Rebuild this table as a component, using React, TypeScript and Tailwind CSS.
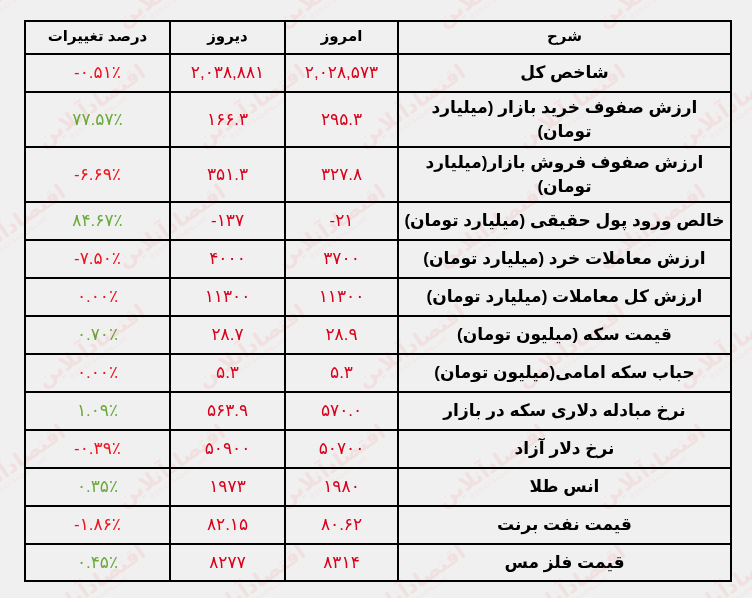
import React from "react";

type Row = { d: React.ReactNode; t: string; y: string; p: string; up: boolean; h: string };

const rows: Row[] = [
  { d: "شاخص کل", t: "۲,۰۲۸,۵۷۳", y: "۲,۰۳۸,۸۸۱", p: "-۰.۵۱٪", up: false, h: "h-[38px]" },
  { d: (<>ارزش صفوف خرید بازار (میلیارد<br />تومان)</>), t: "۲۹۵.۳", y: "۱۶۶.۳", p: "۷۷.۵۷٪", up: true, h: "h-[55px]" },
  { d: (<>ارزش صفوف فروش بازار(میلیارد<br />تومان)</>), t: "۳۲۷.۸", y: "۳۵۱.۳", p: "-۶.۶۹٪", up: false, h: "h-[55px]" },
  { d: "خالص ورود پول حقیقی (میلیارد تومان)", t: "-۲۱", y: "-۱۳۷", p: "۸۴.۶۷٪", up: true, h: "h-[38px]" },
  { d: "ارزش معاملات خرد (میلیارد تومان)", t: "۳۷۰۰", y: "۴۰۰۰", p: "-۷.۵۰٪", up: false, h: "h-[38px]" },
  { d: "ارزش کل معاملات (میلیارد تومان)", t: "۱۱۳۰۰", y: "۱۱۳۰۰", p: "۰.۰۰٪", up: false, h: "h-[38px]" },
  { d: "قیمت سکه (میلیون تومان)", t: "۲۸.۹", y: "۲۸.۷", p: "۰.۷۰٪", up: true, h: "h-[38px]" },
  { d: "حباب سکه امامی(میلیون تومان)", t: "۵.۳", y: "۵.۳", p: "۰.۰۰٪", up: false, h: "h-[38px]" },
  { d: "نرخ مبادله دلاری سکه در بازار", t: "۵۷۰.۰", y: "۵۶۳.۹", p: "۱.۰۹٪", up: true, h: "h-[38px]" },
  { d: "نرخ دلار آزاد", t: "۵۰۷۰۰", y: "۵۰۹۰۰", p: "-۰.۳۹٪", up: false, h: "h-[38px]" },
  { d: "انس طلا", t: "۱۹۸۰", y: "۱۹۷۳", p: "۰.۳۵٪", up: true, h: "h-[38px]" },
  { d: "قیمت نفت برنت", t: "۸۰.۶۲", y: "۸۲.۱۵", p: "-۱.۸۶٪", up: false, h: "h-[38px]" },
  { d: "قیمت فلز مس", t: "۸۳۱۴", y: "۸۲۷۷", p: "۰.۴۵٪", up: true, h: "h-[37px]" },
];

const marks: number[][] = [];
for (let r = 0; r < 6; r++) {
  for (let c = 0; c < 6; c++) {
    marks.push([-50 + c * 160 + (r % 2) * 80, -25 + r * 120]);
  }
}

export default function App() {
  return (
    <div
      className="relative w-[752px] h-[598px] overflow-hidden bg-[#f1f0f0]"
      style={{ fontFamily: '"Liberation Sans", "DejaVu Sans", sans-serif' }}
    >
      <div className="pt-[20px] pl-[24px]">
        <table dir="rtl" className="border-collapse w-[706px] table-fixed">
          <colgroup>
            <col className="w-[333px]" />
            <col className="w-[113px]" />
            <col className="w-[115px]" />
            <col className="w-[145px]" />
          </colgroup>
          <thead>
            <tr className="h-[33px]">
              {["شرح", "امروز", "دیروز", "درصد تغییرات"].map((h) => (
                <th key={h} className="border-2 border-black text-[15px] font-bold text-black text-center align-middle pb-[2px]">
                  {h}
                </th>
              ))}
            </tr>
          </thead>
          <tbody>
            {rows.map((r, i) => (
              <tr key={i} className={r.h}>
                <td className="border-2 border-black text-center align-middle text-[17px] font-bold leading-[24px] text-black">
                  {r.d}
                </td>
                <td dir="ltr" className="border-2 border-black text-center align-middle text-[17px] text-[#d9001b]">
                  {r.t}
                </td>
                <td dir="ltr" className="border-2 border-black text-center align-middle text-[17px] text-[#d9001b]">
                  {r.y}
                </td>
                <td dir="ltr" className={"border-2 border-black text-center align-middle text-[17px] " + (r.up ? "text-[#6aaa3a]" : "text-[#f0141e]")}>
                  {r.p}
                </td>
              </tr>
            ))}
          </tbody>
        </table>
      </div>
      <div className="absolute inset-0 pointer-events-none mix-blend-multiply" aria-hidden="true">
        {marks.map(([x, y], i) => (
          <div
            key={i}
            className="absolute rotate-[-35deg] flex flex-col items-center leading-none whitespace-nowrap"
            style={{ left: x, top: y }}
          >
            <span className="text-[21px] font-bold text-[#ffeeee]" style={{ fontFamily: '"DejaVu Sans", sans-serif' }}>
              اقتصادآنلاین
            </span>
            <span className="text-[6px] tracking-[1px] text-[#fff0f0]">EGHTESADONLINE</span>
          </div>
        ))}
      </div>
    </div>
  );
}
